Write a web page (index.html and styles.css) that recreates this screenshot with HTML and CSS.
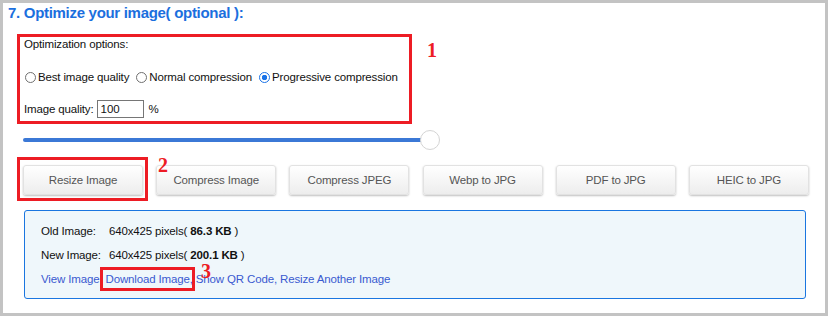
FILE: index.html
```html
<!DOCTYPE html>
<html lang="en">
<head>
    <meta charset="UTF-8" />
    <meta name="viewport" content="width=device-width, initial-scale=1" />
    <title>Optimize your image</title>
    <link rel="stylesheet" href="styles.css">
</head>
<body>
    <div class="frame">
        <h2 class="title">7. Optimize your image( optional ):</h2>

        <div class="options">
            <p class="options-label">Optimization options:</p>
            <div class="radios">
                <label class="radio"><input type="radio" name="opt" value="best" /><span>Best image quality</span></label>
                <label class="radio"><input type="radio" name="opt" value="normal" /><span>Normal compression</span></label>
                <label class="radio"><input type="radio" name="opt" value="progressive" checked /><span>Progressive compression</span></label>
            </div>
            <div class="quality">
                <label for="quality">Image quality:</label>
                <input type="text" id="quality" value="100" />
                <span>%</span>
            </div>
        </div>

        <div class="slider">
            <div class="slider-fill"></div>
            <div class="slider-thumb"></div>
        </div>

        <div class="buttons">
            <button type="button">Resize Image</button>
            <button type="button">Compress Image</button>
            <button type="button">Compress JPEG</button>
            <button type="button">Webp to JPG</button>
            <button type="button">PDF to JPG</button>
            <button type="button">HEIC to JPG</button>
        </div>

        <div class="info">
            <div class="info-row kv">
                <span class="info-key">Old Image:</span>
                <span>640x425 pixels( <b>86.3 KB</b> )</span>
            </div>
            <div class="info-row kv">
                <span class="info-key">New Image:</span>
                <span>640x425 pixels( <b>200.1 KB</b> )</span>
            </div>
            <div class="info-row links">
                <a href="#">View Image</a>, <a href="#">Download Image</a>, <a href="#">Show QR Code</a>, <a href="#">Resize Another Image</a>
            </div>
        </div>

        <!-- annotation marks -->
        <div class="mark mark-box box-2"></div>
        <div class="mark mark-box box-3"></div>
        <span class="mark mark-num num-1">1</span>
        <span class="mark mark-num num-2">2</span>
        <span class="mark mark-num num-3">3</span>
    </div>
</body>
</html>
```

FILE: styles.css
```css
html, body {
    margin: 0;
    padding: 0;
}
body {
    font-family: "Liberation Sans", Arial, sans-serif;
    font-size: 11.5px;
    letter-spacing: -0.15px;
    color: #111;
    background-color: #fff;
}
.frame {
    position: relative;
    width: 828px;
    height: 316px;
    box-sizing: border-box;
    border: 3px solid #c3c3c3;
    background-color: #fff;
}
.title {
    margin: 0;
    padding: 1px 0 0 5px;
    font-size: 15px;
    letter-spacing: -0.3px;
    line-height: 18px;
    font-weight: bold;
    color: #1b6fde;
}
.options {
    margin: 12px 0 0 14px;
    width: 395px;
    height: 90px;
    box-sizing: border-box;
    border: 3px solid #ed1c24;
    padding: 0 4px;
}
.options-label {
    margin: 0;
    line-height: 14px;
}
.radios {
    display: flex;
    align-items: center;
    height: 14px;
    margin-top: 19px;
    white-space: nowrap;
}
.radio {
    display: flex;
    align-items: center;
    margin-right: 6px;
    line-height: 14px;
}
.radio input {
    appearance: none;
    -webkit-appearance: none;
    flex: none;
    width: 11px;
    height: 11px;
    margin: 0 2px 0 1px;
    border: 1px solid #707070;
    border-radius: 50%;
    box-sizing: border-box;
    background-color: #fff;
}
.radio input:checked {
    border-color: #1a73e8;
    background: radial-gradient(circle, #1a73e8 0 2.5px, #fff 3px);
}
.quality {
    display: flex;
    align-items: center;
    height: 18px;
    margin-top: 16px;
    line-height: 14px;
}
.quality input {
    width: 47px;
    height: 18px;
    margin: 0 5px 0 3px;
    padding: 0 3px;
    box-sizing: border-box;
    border: 1px solid #767676;
    font-family: inherit;
    font-size: 11.5px;
    color: #111;
}
.slider {
    display: flex;
    align-items: center;
    width: 417px;
    height: 20px;
    margin: 6px 0 0 20px;
}
.slider-fill {
    flex: 1;
    height: 4px;
    margin-right: -10px;
    border-radius: 2px;
    background-color: #3b78d6;
}
.slider-thumb {
    width: 20px;
    height: 20px;
    box-sizing: border-box;
    border: 1px solid #d4d4d4;
    border-radius: 50%;
    background-color: #fff;
    position: relative;
}
.buttons {
    display: flex;
    justify-content: space-between;
    width: 786px;
    margin: 15px 0 0 20px;
}
.buttons button {
    width: 120px;
    height: 30px;
    border: 1px solid #e2e2e2;
    border-radius: 3px;
    background: linear-gradient(#ffffff, #ededed);
    box-shadow: 0 1px 2px rgba(0,0,0,0.25);
    font-family: inherit;
    font-size: 11.5px;
    letter-spacing: -0.15px;
    color: #555;
    cursor: pointer;
}
.info {
    width: 782px;
    height: 89px;
    box-sizing: border-box;
    margin: 15px 0 0 21px;
    padding: 13px 0 0 16px;
    border: 1px solid #1a76e0;
    border-radius: 3px;
    background-color: #eff7fb;
}
.info-row {
    line-height: 14px;
    margin-bottom: 10px;
}
.kv {
    display: flex;
    white-space: pre;
}
.info-key {
    width: 68px;
}
.links {
    color: #3a5ad0;
}
.links a {
    color: #3a5ad0;
    text-decoration: none;
}
.mark {
    position: absolute;
}
.mark-box {
    box-sizing: border-box;
    border: 3px solid #ed1c24;
}
.box-2 {
    left: 14px;
    top: 154px;
    width: 131px;
    height: 44px;
}
.box-3 {
    left: 97px;
    top: 264px;
    width: 95px;
    height: 24px;
}
.mark-num {
    font-family: "Liberation Serif", "Times New Roman", serif;
    font-weight: bold;
    font-size: 20px;
    line-height: 20px;
    color: #ed1c24;
}
.num-1 {
    left: 424px;
    top: 37px;
}
.num-2 {
    left: 155px;
    top: 152px;
}
.num-3 {
    left: 198px;
    top: 258px;
}
```
